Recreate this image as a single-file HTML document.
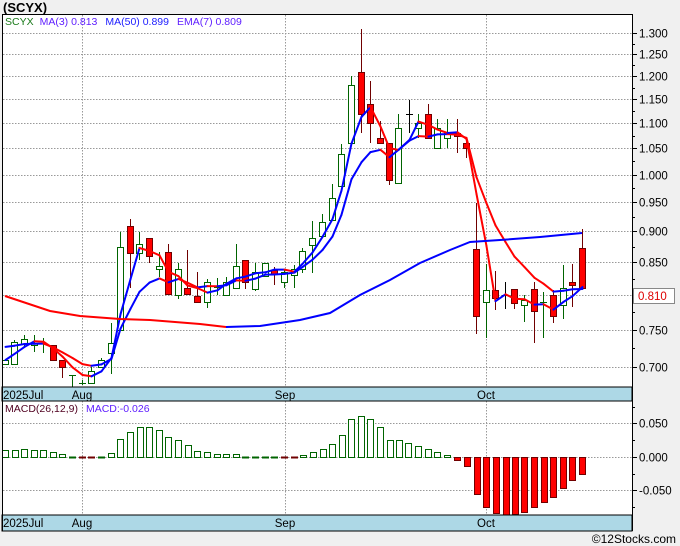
<!DOCTYPE html>
<html><head><meta charset="utf-8"><style>
html,body{margin:0;padding:0;background:#f0f0f0;width:680px;height:546px;overflow:hidden;font-family:"Liberation Sans","DejaVu Sans",sans-serif}
svg{display:block}
</style></head><body>
<svg id="s" width="680" height="546" xmlns="http://www.w3.org/2000/svg" font-family="Liberation Sans, DejaVu Sans, sans-serif">
<rect x="0" y="0" width="680" height="546" fill="#f0f0f0"/>
<rect x="2" y="14" width="630" height="517" fill="#fff"/>
<text x="3" y="12" font-size="13" font-weight="bold" fill="#000">(SCYX)</text>
<g id="g"></g>
<text x="5" y="25" font-size="10.5"><tspan fill="#1a7a1a">SCYX</tspan><tspan fill="#6020ff" dx="6">MA(3)  0.813</tspan><tspan fill="#2020ff" dx="8">MA(50)  0.899</tspan><tspan fill="#6020ff" dx="8">EMA(7)  0.809</tspan></text>
<text x="5" y="412" font-size="10.5"><tspan fill="#500020">MACD(26,12,9)</tspan><tspan fill="#6020ff" dx="8">MACD:-0.026</tspan></text>
<text x="676" y="543" font-size="12" text-anchor="end" fill="#000">©12Stocks.com</text>
</svg>
<script>
var g=document.getElementById('g'),h='';
function Y(p){return 174.6-539.5*Math.log(p)}
function P(y){return Math.exp((174.6-y)/539.5)}
// grid
var lv=[1.3,1.25,1.2,1.15,1.1,1.05,1,0.95,0.9,0.85,0.8,0.75,0.7];
lv.forEach(function(p){var y=Math.round(Y(p))+.5;h+='<line x1="3" x2="632" y1="'+y+'" y2="'+y+'" stroke="#999" stroke-dasharray="1.5,1.5"/>';
h+='<line x1="632" x2="637" y1="'+y+'" y2="'+y+'" stroke="#000"/><text x="639" y="'+(y+4)+'" font-size="11.5" fill="#000">'+p.toFixed(3)+'</text>';});
for(var i=0;i<12;i++){var y=Math.round((Y(lv[i])+Y(lv[i+1]))/2)+.5;h+='<line x1="632" x2="635" y1="'+y+'" y2="'+y+'" stroke="#000"/>';}
[423.5,457.5,490.5].forEach(function(y,i){h+='<line x1="3" x2="632" y1="'+y+'" y2="'+y+'" stroke="#999" stroke-dasharray="1.5,1.5"/><line x1="632" x2="637" y1="'+y+'" y2="'+y+'" stroke="#000"/><text x="639" y="'+(y+4)+'" font-size="11.5">'+['0.050','0.000','-0.050'][i]+'</text>';});
[407,440,474,507].forEach(function(y){h+='<line x1="632" x2="635" y1="'+(y+.5)+'" y2="'+(y+.5)+'" stroke="#000"/>'});
[82.5,285.5,486.5].forEach(function(x){h+='<line x1="'+x+'" x2="'+x+'" y1="15" y2="387" stroke="#999" stroke-dasharray="1.5,1.5"/><line x1="'+x+'" x2="'+x+'" y1="401" y2="515" stroke="#999" stroke-dasharray="1.5,1.5"/>';});
// candles: x,o,c,hi,lo (pixel y) ; col g/r/k
var C=[[5,364,360,364,360,'g'],[14,364,342,364,340,'g'],[24,344,339,347,335,'g'],[34,345,343,352,335,'g'],[43,344,343,353,338,'g'],
[53,345,360,360,345,'r'],[62,360,367,378,360,'r'],[72,375,375,387,375,'g'],[82,383,383,385,380,'g'],[91,383,371,384,367,'g'],[101,367,360,367,358,'g'],
[111,353,343,374,323,'g'],[120,330,247,330,232,'g'],[130,226,253,288,219,'r'],[139,253,244,260,232,'g'],[149,238,256,263,238,'r'],[159,269,266,277,252,'g'],
[168,252,294,294,244,'r'],[178,295,269,299,263,'g'],[187,288,294,294,250,'r'],[197,296,302,302,272,'r'],[207,302,282,308,279,'g'],[217,287,287,295,278,'g'],
[226,295,282,295,277,'g'],[236,288,266,288,244,'g'],[245,260,282,289,260,'r'],[255,289,272,291,263,'g'],[265,276,263,276,263,'g'],[274,270,274,285,267,'r'],
[284,282,272,288,269,'g'],[294,275,269,288,265,'g'],[302,269,251,273,248,'g'],[312,245,238,273,221,'g'],[322,236,222,236,214,'g'],[332,220,198,220,184,'g'],
[341,186,154,186,144,'g'],[351,143,85,143,76,'g'],[361,72,114,133,29,'r'],[370,104,123,143,81,'r'],[380,138,143,143,121,'r'],[389,143,180,185,143,'r'],
[398,183,128,183,114,'g'],[409,114,114,133,100,'k'],[418,128,123,138,114,'g'],[428,114,138,138,104,'r'],[437,148,128,148,119,'g'],[447,138,133,148,119,'g'],
[457,133,136,153,119,'r'],[466,143,148,158,140,'r'],[476,249,316,334,203,'r'],[486,302,290,338,264,'g'],[495,290,298,310,271,'r'],[505,295,295,309,282,'k'],
[514,289,303,309,289,'r'],[524,305,300,322,295,'g'],[534,289,311,343,282,'r'],[543,302,302,338,292,'g'],[553,295,316,323,290,'r'],[563,305,288,319,265,'g'],
[572,282,285,307,264,'r'],[582,248,288,288,229,'r']];
var col={g:'#006400',r:'#700000',k:'#000'};
C.forEach(function(c){var x=c[0],t=Math.min(c[1],c[2]),b=Math.max(c[1],c[2]),s=col[c[5]];
h+='<line x1="'+(x+.5)+'" x2="'+(x+.5)+'" y1="'+c[4]+'" y2="'+c[3]+'" stroke="'+s+'"/>';
if(b-t<1.5)h+='<line x1="'+(x-3)+'" x2="'+(x+4)+'" y1="'+(t+.5)+'" y2="'+(t+.5)+'" stroke="'+s+'"/>';
else h+='<rect x="'+(x-2.5)+'" y="'+(t+.5)+'" width="6" height="'+(b-t)+'" fill="'+(c[5]=='r'?'#f00':'#fff')+'" stroke="'+s+'"/>';});
// MA lines
var cl=C.map(function(c){return P(c[2])});
function seg(vals,xs){var o='';for(var i=1;i<vals.length;i++){var c=vals[i]<vals[i-1]?'#f00':'#00f';
o+='<line x1="'+xs[i-1]+'" y1="'+Y(vals[i-1]).toFixed(1)+'" x2="'+xs[i]+'" y2="'+Y(vals[i]).toFixed(1)+'" stroke="'+c+'" stroke-width="2" stroke-linecap="round"/>';}return o;}
var xs=C.map(function(c){return c[0]+.5});
var ma=[],ema=[],e=(cl[0]+cl[1]+cl[2])/3;
for(var i=0;i<cl.length;i++){var a=cl[Math.max(0,i-2)],b=cl[Math.max(0,i-1)];ma.push((a+b+cl[i])/3);e=i==0?e:e+(cl[i]-e)*0.25;ema.push(e);}
h+=seg(ema,xs)+seg(ma,xs);
var m50=[[5,296],[50,311],[80,316],[120,319],[150,320],[200,324],[226,327]],m50b=[[226,327],[260,326],[300,320],[330,313],[360,295],[390,280],[420,263],[450,250],[470,242],[500,240],[540,237],[582,233]];
h+='<polyline points="'+m50.join(' ')+'" fill="none" stroke="#f00" stroke-width="2"/><polyline points="'+m50b.join(' ')+'" fill="none" stroke="#00f" stroke-width="2"/>';
// price tag
h+='<rect x="633.5" y="288.5" width="41" height="15" fill="#fff" stroke="#888"/><text x="638" y="300" font-size="11.5" fill="#d00">0.810</text>';
// MACD bars
var M=[[5,7],[15,7],[24,8],[34,7],[43,7],[53,5],[62,3],[72,0],[82,-0.5],[91,-0.5],[101,0],[111,4],[120,18],[130,25],[140,30],[149,30],[159,27],[168,20],[178,17],[188,12],[197,6],[207,5],[217,3],[226,3],[236,3],[245,0],[255,0],[265,0],[274,0],[284,-0.5],[294,-0.5],[303,2],[313,5],[323,8],[332,13],[342,22],[351,38],[361,41],[370,38],[380,30],[390,17],[399,17],[408,14],[418,11],[428,8],[437,5],[447,2],
[457,-3],[467,-9],[477,-37],[486,-50],[496,-56],[506,-58],[515,-57],[524,-55],[534,-50],[544,-45],[553,-40],[563,-31],[572,-23],[582,-17]];
M.forEach(function(m){var x=m[0],v=m[1];
if(Math.abs(v)<1){h+='<line x1="'+(x-3)+'" x2="'+(x+4)+'" y1="457.5" y2="457.5" stroke="'+(v<0?'#700000':'#006400')+'" stroke-width="2"/>';}
else if(v>0)h+='<rect x="'+(x-2.5)+'" y="'+(457.5-v)+'" width="6" height="'+v+'" fill="#fff" stroke="#006400"/>';
else h+='<rect x="'+(x-2.5)+'" y="457.5" width="6" height="'+(-v)+'" fill="#f00" stroke="#700000"/>';});
// date strips
[[387,401],[515,531]].forEach(function(r){h+='<rect x="2" y="'+r[0]+'" width="630" height="'+(r[1]-r[0])+'" fill="#add8e6" stroke="#000"/>';
h+='<text x="3" y="'+(r[0]+12)+'" font-size="11.5">2025Jul</text><text x="82" y="'+(r[0]+12)+'" font-size="11.5" text-anchor="middle">Aug</text><text x="285" y="'+(r[0]+12)+'" font-size="11.5" text-anchor="middle">Sep</text><text x="486" y="'+(r[0]+12)+'" font-size="11.5" text-anchor="middle">Oct</text>';});
h+='<line x1="2" x2="632" y1="14.5" y2="14.5" stroke="#000"/><line x1="2.5" x2="2.5" y1="14" y2="531" stroke="#000"/><line x1="632.5" x2="632.5" y1="14" y2="531" stroke="#000"/>';
g.innerHTML=h;
</script>
</body></html>
